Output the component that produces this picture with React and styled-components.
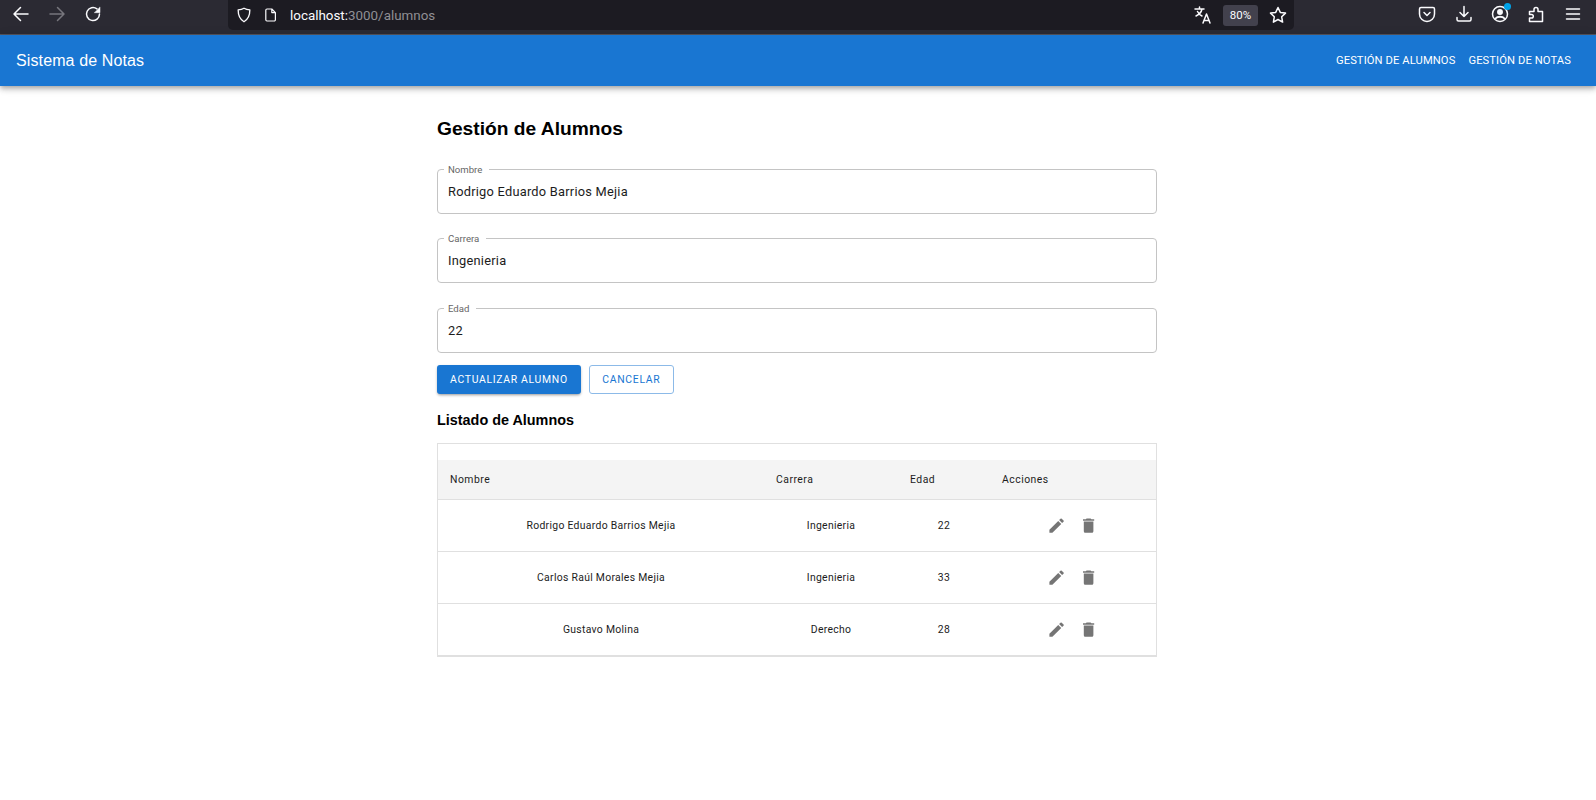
import React from "react";
import styled, { createGlobalStyle } from "styled-components";

const GlobalStyle = createGlobalStyle`
  body {
    margin: 0;
    background: #fff;
    font-family: Roboto, "Liberation Sans", sans-serif;
    color: #000;
  }
`
const BrowserBar = styled.div`
  height: 34px;
  background: #2b2a33;
  border-bottom: 1px solid #55545c;
  display: flex;
  align-items: flex-start;
`
const NavButtons = styled.div`
  width: 228px;
  height: 28px;
  display: flex;
  align-items: center;
  gap: 16px;
  padding-left: 11px;
  box-sizing: border-box;
`
const UrlBar = styled.div`
  width: 1066px;
  height: 30px;
  background: #1c1b22;
  border-radius: 0 0 5px 5px;
  display: flex;
  align-items: center;
  padding: 0 6px 0 7px;
  box-sizing: border-box;
`
const UrlIcons = styled.div`
  display: flex;
  align-items: center;
  gap: 10px;
  margin-right: 11px;
`
const UrlText = styled.div`
  font-size: 13.4px;
  color: #8f8f94;
  flex: 1;
  span {
    color: #fbfbfe;
  }
`
const ZoomChip = styled.div`
  width: 35px;
  height: 21px;
  margin: 0 10px;
  border-radius: 3px;
  background: #42414d;
  color: #fbfbfe;
  font-size: 11.5px;
  display: flex;
  align-items: center;
  justify-content: center;
`
const ToolIcons = styled.div`
  flex: 1;
  height: 27px;
  display: flex;
  align-items: center;
  justify-content: flex-end;
  gap: 16.3px;
  padding-right: 13.5px;
`
const ProfileIcon = styled.div`
  position: relative;
  display: flex;
  &::after {
    content: "";
    position: absolute;
    top: -1px;
    right: -1px;
    width: 7px;
    height: 7px;
    border-radius: 50%;
    background: #00a2e8;
  }
`
const AppBar = styled.header`
  height: 51px;
  background: #1976d2;
  box-shadow: 0 2px 4px -1px rgba(0,0,0,.2), 0 4px 5px 0 rgba(0,0,0,.14), 0 1px 10px 0 rgba(0,0,0,.12);
  display: flex;
  align-items: center;
  justify-content: space-between;
  padding: 0 25px 0 16px;
  color: #fff;
`
const Brand = styled.div`
  font-family: "Liberation Sans", Arial, sans-serif;
  font-size: 16px;
  letter-spacing: 0.12px;
`
const NavLinks = styled.nav`
  display: flex;
  gap: 13px;
`
const NavLink = styled.a`
  font-size: 11.2px;
  font-weight: 400;
  letter-spacing: 0.1px;
  text-transform: uppercase;
  color: #fff;
`
const Main = styled.main`
  width: 720px;
  margin-left: 437px;
  padding-top: 31px;
`
const Title = styled.h1`
  margin: 0 0 29px;
  font-family: "Liberation Sans", Arial, sans-serif;
  font-size: 19.2px;
  line-height: 23px;
  font-weight: 700;
`
const Form = styled.div`
  display: flex;
  flex-direction: column;
  gap: 24.4px;
`
const Field = styled.div`
  position: relative;
  height: 45px;
  border: 1px solid #c4c4c4;
  border-radius: 4px;
  box-sizing: border-box;
  display: flex;
  align-items: center;
  padding-left: 10px;
`
const FieldLabel = styled.label`
  position: absolute;
  top: -6px;
  left: 6px;
  padding: 0 7px 0 4px;
  background: #fff;
  font-size: 9.6px;
  line-height: 11px;
  color: #666;
`
const FieldInput = styled.input`
  width: 100%;
  border: 0;
  outline: 0;
  padding: 0;
  font-family: Roboto, sans-serif;
  font-size: 12.8px;
  letter-spacing: 0.25px;
  color: #1c1c1c;
  background: transparent;
`
const Buttons = styled.div`
  display: flex;
  gap: 8px;
  margin-top: 12px;
`
const Button = styled.button`
  height: 29px;
  padding: 0 ${(p) => (p.$outlined ? "12.5px" : "13px")};
  box-sizing: border-box;
  border-radius: 3px;
  font-family: Roboto, sans-serif;
  font-size: 10.4px;
  letter-spacing: 0.7px;
  text-transform: uppercase;
  background: ${(p) => (p.$outlined ? "#fff" : "#1976d2")};
  color: ${(p) => (p.$outlined ? "#1976d2" : "#fff")};
  border: ${(p) => (p.$outlined ? "1px solid #8cbae8" : "0")};
  box-shadow: ${(p) => (p.$outlined ? "none" : "0 2px 3px -1px rgba(0,0,0,.3), 0 1px 3px rgba(0,0,0,.14)")};
`
const SubTitle = styled.h2`
  margin: 18px 0 14px;
  font-family: "Liberation Sans", Arial, sans-serif;
  font-size: 14.4px;
  line-height: 17px;
  font-weight: 700;
`
const TableBox = styled.div`
  border: 1px solid #e0e0e0;
  border-bottom-width: 2px;
  padding-top: 16px;
`
const columns = "326px 134px 92px 1fr"
const HeadRow = styled.div`
  height: 40px;
  background: #f4f4f4;
  border-bottom: 1px solid #e0e0e0;
  box-sizing: border-box;
  display: grid;
  grid-template-columns: ${columns};
  align-items: center;
  font-size: 10.4px;
  letter-spacing: 0.5px;
  color: #1c1c1c;
`
const HeadCell = styled.div`
  padding-left: 12px;
`
const Row = styled.div`
  height: 52px;
  box-sizing: border-box;
  border-bottom: 1px solid #e0e0e0;
  display: grid;
  grid-template-columns: ${columns};
  align-items: center;
  font-size: 10.4px;
  letter-spacing: 0.3px;
  color: #1c1c1c;
  &:last-child {
    height: 51px;
    border-bottom: 0;
  }
`
const Cell = styled.div`
  text-align: center;
`
const Actions = styled.div`
  display: flex;
  align-items: center;
  justify-content: center;
  gap: 12.8px;
  svg {
    display: block;
  }
`

const Line = ({ size = 20, color = "#fbfbfe", children }) => (
  <svg width={size} height={size} viewBox="0 0 20 20" fill="none" stroke={color} strokeWidth="1.5" strokeLinecap="round" strokeLinejoin="round">
    {children}
  </svg>
)

const EditIcon = () => (
  <svg width="19.2" height="19.2" viewBox="0 0 24 24" fill="#757575">
    <path d="M3 17.25V21h3.75L17.81 9.94l-3.75-3.75L3 17.25zM20.71 7.04c.39-.39.39-1.02 0-1.41l-2.34-2.34c-.39-.39-1.02-.39-1.41 0l-1.83 1.83 3.75 3.75 1.83-1.83z" />
  </svg>
)
const DeleteIcon = () => (
  <svg width="19.2" height="19.2" viewBox="0 0 24 24" fill="#757575">
    <path d="M6 19c0 1.1.9 2 2 2h8c1.1 0 2-.9 2-2V7H6v12zM19 4h-3.5l-1-1h-5l-1 1H5v2h14V4z" />
  </svg>
)

const alumnos = [
  { nombre: "Rodrigo Eduardo Barrios Mejia", carrera: "Ingenieria", edad: 22 },
  { nombre: "Carlos Raúl Morales Mejia", carrera: "Ingenieria", edad: 33 },
  { nombre: "Gustavo Molina", carrera: "Derecho", edad: 28 },
]

const App = () => {
  return <>
    <GlobalStyle />
    <BrowserBar>
      <NavButtons>
        <Line><path d="M17 10H3.500M9.500 3.500 3 10l6.500 6.500" /></Line>
        <Line color="#77767d"><path d="M3 10h13.500M10.500 3.500 17 10l-6.500 6.500" /></Line>
        <Line>
          <path d="M16.500 10a6.500 6.500 0 1 1-2.500-5.100" />
          <path d="M17 3.300V8.700h-5.400Z" fill="#fbfbfe" strokeWidth="0.5" />
        </Line>
      </NavButtons>
      <UrlBar>
        <UrlIcons>
          <Line size={18}><path d="M10 2.500c2 1.200 4.200 1.700 6.500 1.800 0 6-1.500 10.500-6.500 13.200C5 14.800 3.500 10.300 3.500 4.300 5.800 4.200 8 3.700 10 2.500Z" /></Line>
          <Line size={16}><path d="M5 2.500h6l4.500 4.500v9a1.500 1.500 0 0 1-1.500 1.500H5A1.500 1.500 0 0 1 3.500 16V4A1.500 1.500 0 0 1 5 2.500ZM11 2.500V7h4.500" /></Line>
        </UrlIcons>
        <UrlText><span>localhost:</span>3000/alumnos</UrlText>
        <Line><path d="M2 4h9M6.500 2v2M9 4c-.6 3-2.800 5.500-6 7M4.500 6.500c1 2 2.500 3.500 4.500 4.500M10 18l3.500-9 3.500 9M11.200 15.500h4.600" /></Line>
        <ZoomChip>80%</ZoomChip>
        <Line><path d="m10 2.500 2.300 4.900 5.200.7-3.800 3.700.9 5.300L10 14.500l-4.600 2.600.9-5.300L2.500 8.100l5.200-.7L10 2.500Z" /></Line>
      </UrlBar>
      <ToolIcons>
        <Line><path d="M4 3.500h12A1.500 1.500 0 0 1 17.500 5v5a7.500 7.500 0 0 1-15 0V5A1.500 1.500 0 0 1 4 3.500ZM7 8.500l3 3 3-3" /></Line>
        <Line><path d="M10 2.500v10M6 8.500l4 4 4-4M3 13.500v2a1.500 1.500 0 0 0 1.500 1.500h11a1.500 1.500 0 0 0 1.500-1.500v-2" /></Line>
        <ProfileIcon>
          <Line><circle cx="10" cy="10" r="7.500" /><circle cx="10" cy="8" r="2.200" fill="#fbfbfe" /><path d="M5.500 14.500c2-2.500 7-2.500 9 0" strokeWidth="2" /></Line>
        </ProfileIcon>
        <Line><path d="M3.500 7.500H8V5.500a2 2 0 1 1 4 0V7.500h4.500V17.500H3.500v-3.500H5.500a1.800 1.800 0 0 0 0-3.600H3.500Z" /></Line>
        <Line><path d="M3.500 5h13M3.500 10h13M3.500 15h13" /></Line>
      </ToolIcons>
    </BrowserBar>
    <AppBar>
      <Brand>Sistema de Notas</Brand>
      <NavLinks>
        <NavLink>Gestión de Alumnos</NavLink>
        <NavLink>Gestión de Notas</NavLink>
      </NavLinks>
    </AppBar>
    <Main>
      <Title>Gestión de Alumnos</Title>
      <Form>
        <Field>
          <FieldLabel>Nombre</FieldLabel>
          <FieldInput readOnly value="Rodrigo Eduardo Barrios Mejia" />
        </Field>
        <Field>
          <FieldLabel>Carrera</FieldLabel>
          <FieldInput readOnly value="Ingenieria" />
        </Field>
        <Field>
          <FieldLabel>Edad</FieldLabel>
          <FieldInput readOnly value="22" />
        </Field>
      </Form>
      <Buttons>
        <Button>Actualizar Alumno</Button>
        <Button $outlined>Cancelar</Button>
      </Buttons>
      <SubTitle>Listado de Alumnos</SubTitle>
      <TableBox>
        <HeadRow>
          <HeadCell>Nombre</HeadCell>
          <HeadCell>Carrera</HeadCell>
          <HeadCell>Edad</HeadCell>
          <HeadCell>Acciones</HeadCell>
        </HeadRow>
        {alumnos.map((alumno) =>
          <Row key={alumno.nombre}>
            <Cell>{alumno.nombre}</Cell>
            <Cell>{alumno.carrera}</Cell>
            <Cell>{alumno.edad}</Cell>
            <Actions>
              <EditIcon />
              <DeleteIcon />
            </Actions>
          </Row>
        )}
      </TableBox>
    </Main>
  </>
};

export default App;
